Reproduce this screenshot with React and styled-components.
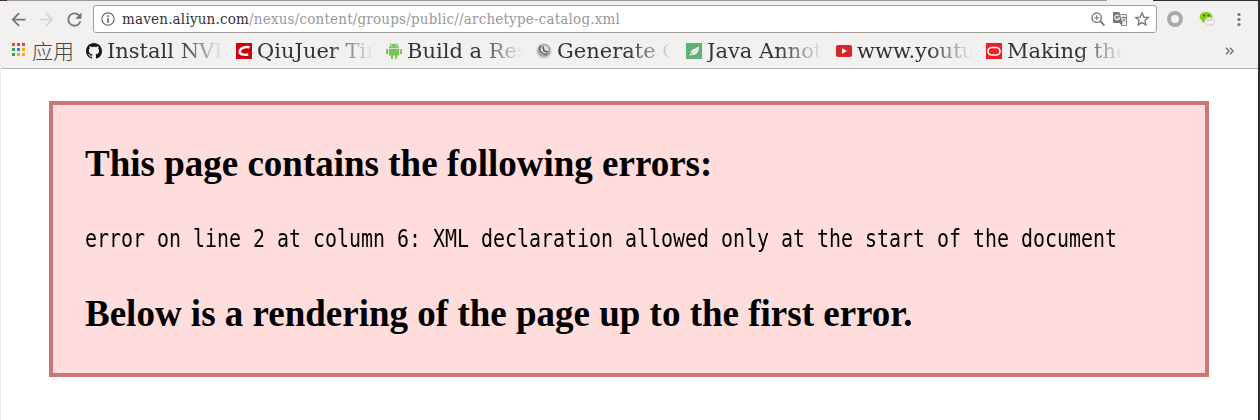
import React from "react";
import styled, { createGlobalStyle } from "styled-components";

const Global = createGlobalStyle`
  * { box-sizing: border-box; }
  body { margin: 0; background: #fff; overflow: hidden; }
  svg { display: block; flex: none; }
`;

const Window = styled.div`
  width: 1260px;
  height: 420px;
  display: flex;
  flex-direction: column;
  border-left: 1px solid #f1f0ee;
  border-right: 2px solid #2d2d2d;
  background: #fff;
`;

const TabEdge = styled.div`
  height: 1px;
  flex: none;
  margin-left: -1px;
  background: linear-gradient(90deg, #3a3032 7px, #9c9896 7px 1107px, #f2f1f0 1107px 1153px, #2d2d2d 1153px);
`;

const Chrome = styled.header`
  height: 68px;
  flex: none;
  background: #f2f1f0;
  border-bottom: 1px solid #b4b2b6;
`;

const Toolbar = styled.div`
  height: 36px;
  display: flex;
  align-items: center;
  padding: 0 11px 0 6px;
`;

const NavButton = styled.span`
  width: 22px;
  height: 22px;
  display: grid;
  place-items: center;
  margin-right: 6px;
  color: ${(p) => (p.$disabled ? "#d6d5d4" : "#757575")};
`;

const AddressBar = styled.div`
  width: 1064px;
  height: 28px;
  margin-left: 2px;
  padding: 0 6px 0 7px;
  display: flex;
  align-items: center;
  background: #fff;
  border: 1px solid #a3a1a0;
  border-radius: 3px;
`;

const Url = styled.span`
  flex: 1;
  margin-left: 7px;
  font: 15px/20px "DejaVu Serif Condensed", "DejaVu Serif", serif;
  font-stretch: condensed;
  letter-spacing: 0.2px;
  color: #999;
  white-space: nowrap;
`;

const Host = styled.span`
  color: #333;
`;

const AddressActions = styled.div`
  display: flex;
  align-items: center;
  gap: 6px;
`;

const Extensions = styled.div`
  display: flex;
  flex: 1;
  align-items: center;
  justify-content: space-between;
  padding-left: 10px;
`;

const Bookmarks = styled.nav`
  height: 27px;
  display: flex;
  align-items: center;
  padding-left: 10px;
`;

const Apps = styled.div`
  width: 75px;
  display: flex;
  align-items: center;
  gap: 5px;
  padding-bottom: 2px;
  font: 300 21px/26px "Noto Sans CJK SC", sans-serif;
  color: #444;
  white-space: nowrap;
`;

const Bookmark = styled.div`
  width: 150px;
  display: flex;
  align-items: center;
  gap: 5px;
`;

const BookmarkLabel = styled.span`
  width: 116px;
  overflow: hidden;
  white-space: nowrap;
  font: 21px/26px "DejaVu Serif", serif;
  color: #333;
  mask-image: linear-gradient(90deg, #000 72px, transparent 116px);
`;

const Overflow = styled.span`
  display: grid;
  place-items: center;
  margin-left: 89px;
`;

const Page = styled.main`
  padding: 32px 49px 0 48px;
`;

const ErrorBox = styled.section`
  height: 276px;
  border: 4px solid #c77;
  background: #fdd;
  padding: 0 32px;
  overflow: hidden;
  color: #000;
`;

const Heading = styled.h3`
  margin: 37px 0;
  font: bold 37px/43px "Liberation Serif", serif;
  white-space: nowrap;
`;

const Message = styled.div`
  height: 33px;
  padding-top: 1px;
  font: 24px/33px "DejaVu Sans Mono", monospace;
  white-space: nowrap;
  transform: scaleX(0.8305);
  transform-origin: 0 0;
`;

const Icon = ({ size = 21, box = "0 0 24 24", children }) => (
  <svg width={size} height={size} viewBox={box} fill="currentColor">
    {children}
  </svg>
);

const InfoIcon = () => (
  <svg width="14" height="14" viewBox="0 0 14 14" fill="#6f6f6f">
    <circle cx="7" cy="7" r="6.2" fill="none" stroke="#6f6f6f" strokeWidth="1.3" />
    <path d="M6.2 3.2h1.7v1.7H6.2zM6.2 6h1.7v4.8H6.2z" />
  </svg>
);

const ZoomIcon = () => (
  <svg width="16" height="16" viewBox="0 0 16 16" fill="none" stroke="#757575">
    <circle cx="6.7" cy="6.7" r="4.7" strokeWidth="1.4" />
    <path d="M10.2 10.2l4.2 4.2" strokeWidth="1.8" />
    <path d="M4.3 6.7h4.8M6.7 4.3v4.8" strokeWidth="1.1" />
  </svg>
);

const TranslateIcon = () => (
  <svg width="16" height="16" viewBox="0 0 16 16">
    <path d="M6.5 3.5h8v11h-5z" fill="#f5f5f5" stroke="#888" />
    <path d="M1 1h6.3l3.2 11H2a1 1 0 0 1-1-1z" fill="#757575" />
    <path d="M7.2 5.2A2.4 2.4 0 1 0 7.5 7H5.3" fill="none" stroke="#fff" strokeWidth="1.1" />
    <path d="M9.5 6.5H14M11.6 5.5v1M13.2 6.5c-.3 2-1.4 3.3-2.8 4.2M10.3 7.6c.6 1.3 1.7 2.3 3 3" fill="none" stroke="#777" strokeWidth=".9" />
    <path d="M8.2 12h2.3l-1.2 2.5z" fill="#666" />
  </svg>
);

const StarIcon = () => (
  <svg width="16" height="16" viewBox="0 0 16 16" fill="none" stroke="#757575" strokeWidth="1.3">
    <path d="M8 1.9l1.8 4.2 4.5.4-3.4 3 1 4.4L8 11.6l-3.9 2.3 1-4.4-3.4-3 4.5-.4z" />
  </svg>
);

const RingIcon = () => (
  <svg width="16" height="16" viewBox="0 0 16 16">
    <circle cx="8" cy="8" r="6" fill="#f4f4f4" stroke="#aaa" strokeWidth="4" />
  </svg>
);

const ChatIcon = () => (
  <svg width="16" height="16" viewBox="0 0 16 16">
    <path d="M7 1c4 0 6.5 2.3 6.5 5S11 11 7 11l-1.5-.2-2.3 1.5.3-2.4C1.9 9 .7 7.6.7 6 .7 3.300 3 1 7 1z" fill="#86cf14" />
    <circle cx="5" cy="4.5" r=".9" fill="#294b08" />
    <circle cx="9.4" cy="4.5" r=".9" fill="#294b08" />
    <path d="M10.500 6.300c2.900 0 4.800 1.700 4.800 3.800 0 1.200-.7 2.200-1.700 2.900l.3 1.700-1.700-1c-3.500.7-6.400-1-6.400-3.600 0-2.100 2-3.800 4.700-3.800z" fill="#f3f3f3" stroke="#bbb" strokeWidth=".6" />
    <circle cx="9" cy="9" r=".7" fill="#777" />
    <circle cx="12" cy="9" r=".7" fill="#777" />
  </svg>
);

const MenuIcon = () => (
  <svg width="16" height="16" viewBox="0 0 16 16" fill="#757575">
    <circle cx="8" cy="3.500" r="1.600" />
    <circle cx="8" cy="8.500" r="1.600" />
    <circle cx="8" cy="13.500" r="1.600" />
  </svg>
);

const gridColors = ["#ea4335", "#ea4335", "#ea4335", "#35a25a", "#1a87f0", "#f9ac05", "#35a25a", "#f9ac05", "#f9ac05"];

const AppsIcon = () => (
  <svg width="16" height="16" viewBox="0 0 16 16" shapeRendering="crispEdges">
    {gridColors.map((c, i) => (
      <rect key={i} x={1 + (i % 3) * 5} y={1 + Math.floor(i / 3) * 5} width="3" height="3" fill={c} />
    ))}
  </svg>
);

const favicons = {
  github: (
    <path
      fill="#191717"
      d="M8 0C3.580 0 0 3.580 0 8c0 3.540 2.290 6.530 5.470 7.590.4.070.55-.17.55-.38 0-.19-.01-.82-.01-1.490-2.010.37-2.530-.49-2.690-.94-.09-.23-.48-.94-.82-1.130-.28-.15-.68-.52-.01-.53.63-.01 1.080.58 1.230.82.72 1.210 1.870.87 2.330.66.070-.52.28-.87.51-1.070-1.780-.2-3.640-.89-3.640-3.950 0-.87.31-1.590.82-2.150-.08-.2-.36-1.020.08-2.120 0 0 .67-.21 2.200.82.640-.18 1.320-.27 2-.27s1.360.09 2 .27c1.530-1.040 2.200-.82 2.200-.82.440 1.100.160 1.920.080 2.120.510.560.820 1.270.820 2.150 0 3.070-1.870 3.750-3.650 3.950.290.250.540.730.540 1.480 0 1.070-.010 1.930-.010 2.200 0 .210.150.460.550.380A8.010 8.010 0 0 0 16 8c0-4.420-3.580-8-8-8z"
    />
  ),
  csdn: (
    <>
      <path fill="#ce000d" d="M0 0h16v16H0z" />
      <path d="M13.500 4.300C9 3.600 4 5 3.700 8.500c-.2 2.900 4 3.700 8.600 3" fill="none" stroke="#fff" strokeWidth="2.500" />
    </>
  ),
  android: (
    <g fill="#78c257">
      <path d="M3 5a5 4.300 0 0 1 10 0zM3 5.700h10v6.800H3zM0 6.300h2.200v4.700H0zM13.800 6.300H16v4.700h-2.200zM5 12h2v4H5zM9 12h2v4H9z" />
      <path d="M4 0l1.500 2M12 0l-1.500 2" stroke="#78c257" strokeWidth=".8" />
      <circle cx="5.700" cy="3.200" r=".6" fill="#fff" />
      <circle cx="10.300" cy="3.200" r=".6" fill="#fff" />
    </g>
  ),
  clock: (
    <>
      <circle cx="8" cy="8" r="7.800" fill="#d3d2d1" />
      <circle cx="8" cy="7.500" r="6.200" fill="#999" />
      <circle cx="8" cy="7.200" r="4.800" fill="#dedede" />
      <path d="M5 2.800C1.900 7 5.500 12.300 11.500 10.800" fill="none" stroke="#555" strokeWidth="1.300" />
      <path d="M7 3.500l1 4.500 4 1" fill="none" stroke="#555" strokeWidth="1.400" />
    </>
  ),
  leaf: (
    <>
      <path fill="#62b277" d="M0 0h16v16H0z" />
      <path d="M12.800 3.500C12.700 9 11 12 7 11.700l-1-.3-1.800 1.300-.7-.5 1.400-1.500C4.300 6.500 8 6.800 12.800 3.500z" fill="#fff" />
      <path d="M5 11c3-1 5-3 6-5" fill="none" stroke="#62b277" strokeWidth=".7" />
    </>
  ),
  youtube: (
    <>
      <rect y="2" width="16" height="12" rx="2" fill="#d9252a" />
      <path d="M6 5.300l5 2.700-5 2.700z" fill="#fff" />
    </>
  ),
  oracle: (
    <>
      <path fill="#ee1c25" d="M0 0h16v16H0z" />
      <rect x="2" y="4.500" width="12" height="7.500" rx="3.700" fill="none" stroke="#fff" strokeWidth="1.700" />
    </>
  ),
};

const bookmarks = [
  ["github", "Install NVIDIA"],
  ["csdn", "QiuJuer Times"],
  ["android", "Build a Respo"],
  ["clock", "Generate Cod"],
  ["leaf", "Java Annotati"],
  ["youtube", "www.youtube"],
  ["oracle", "Making the m"],
];

export default function App() {
  return (
    <Window>
      <Global />
      <TabEdge />
      <Chrome>
        <Toolbar>
          <NavButton>
            <Icon><path d="M20 11H7.830l5.590-5.590L12 4l-8 8 8 8 1.410-1.410L7.830 13H20v-2z" /></Icon>
          </NavButton>
          <NavButton $disabled>
            <Icon><path d="M12 4l-1.410 1.410L16.170 11H4v2h12.170l-5.580 5.590L12 20l8-8z" /></Icon>
          </NavButton>
          <NavButton>
            <Icon><path d="M17.650 6.350A7.958 7.958 0 0 0 12 4a8 8 0 1 0 7.730 10h-2.080A5.990 5.990 0 0 1 12 18a6 6 0 1 1 4.220-10.220L13 11h7V4l-2.350 2.350z" /></Icon>
          </NavButton>
          <AddressBar>
            <InfoIcon />
            <Url><Host>maven.aliyun.com</Host>/nexus/content/groups/public//archetype-catalog.xml</Url>
            <AddressActions>
              <ZoomIcon />
              <TranslateIcon />
              <StarIcon />
            </AddressActions>
          </AddressBar>
          <Extensions>
            <RingIcon />
            <ChatIcon />
            <MenuIcon />
          </Extensions>
        </Toolbar>
        <Bookmarks>
          <Apps><AppsIcon />应用</Apps>
          {bookmarks.map(([icon, label]) => (
            <Bookmark key={icon}>
              <Icon size={16} box="0 0 16 16">{favicons[icon]}</Icon>
              <BookmarkLabel>{label}</BookmarkLabel>
            </Bookmark>
          ))}
          <Overflow>
            <svg width="9" height="8" viewBox="0 0 9 8" fill="none" stroke="#757575" strokeWidth="1.500">
              <path d="M1 .8L4 4 1 7.200M5 .8L8 4 5 7.200" />
            </svg>
          </Overflow>
        </Bookmarks>
      </Chrome>
      <Page>
        <ErrorBox>
          <Heading>This page contains the following errors:</Heading>
          <Message>error on line 2 at column 6: XML declaration allowed only at the start of the document</Message>
          <Heading>Below is a rendering of the page up to the first error.</Heading>
        </ErrorBox>
      </Page>
    </Window>
  );
}
